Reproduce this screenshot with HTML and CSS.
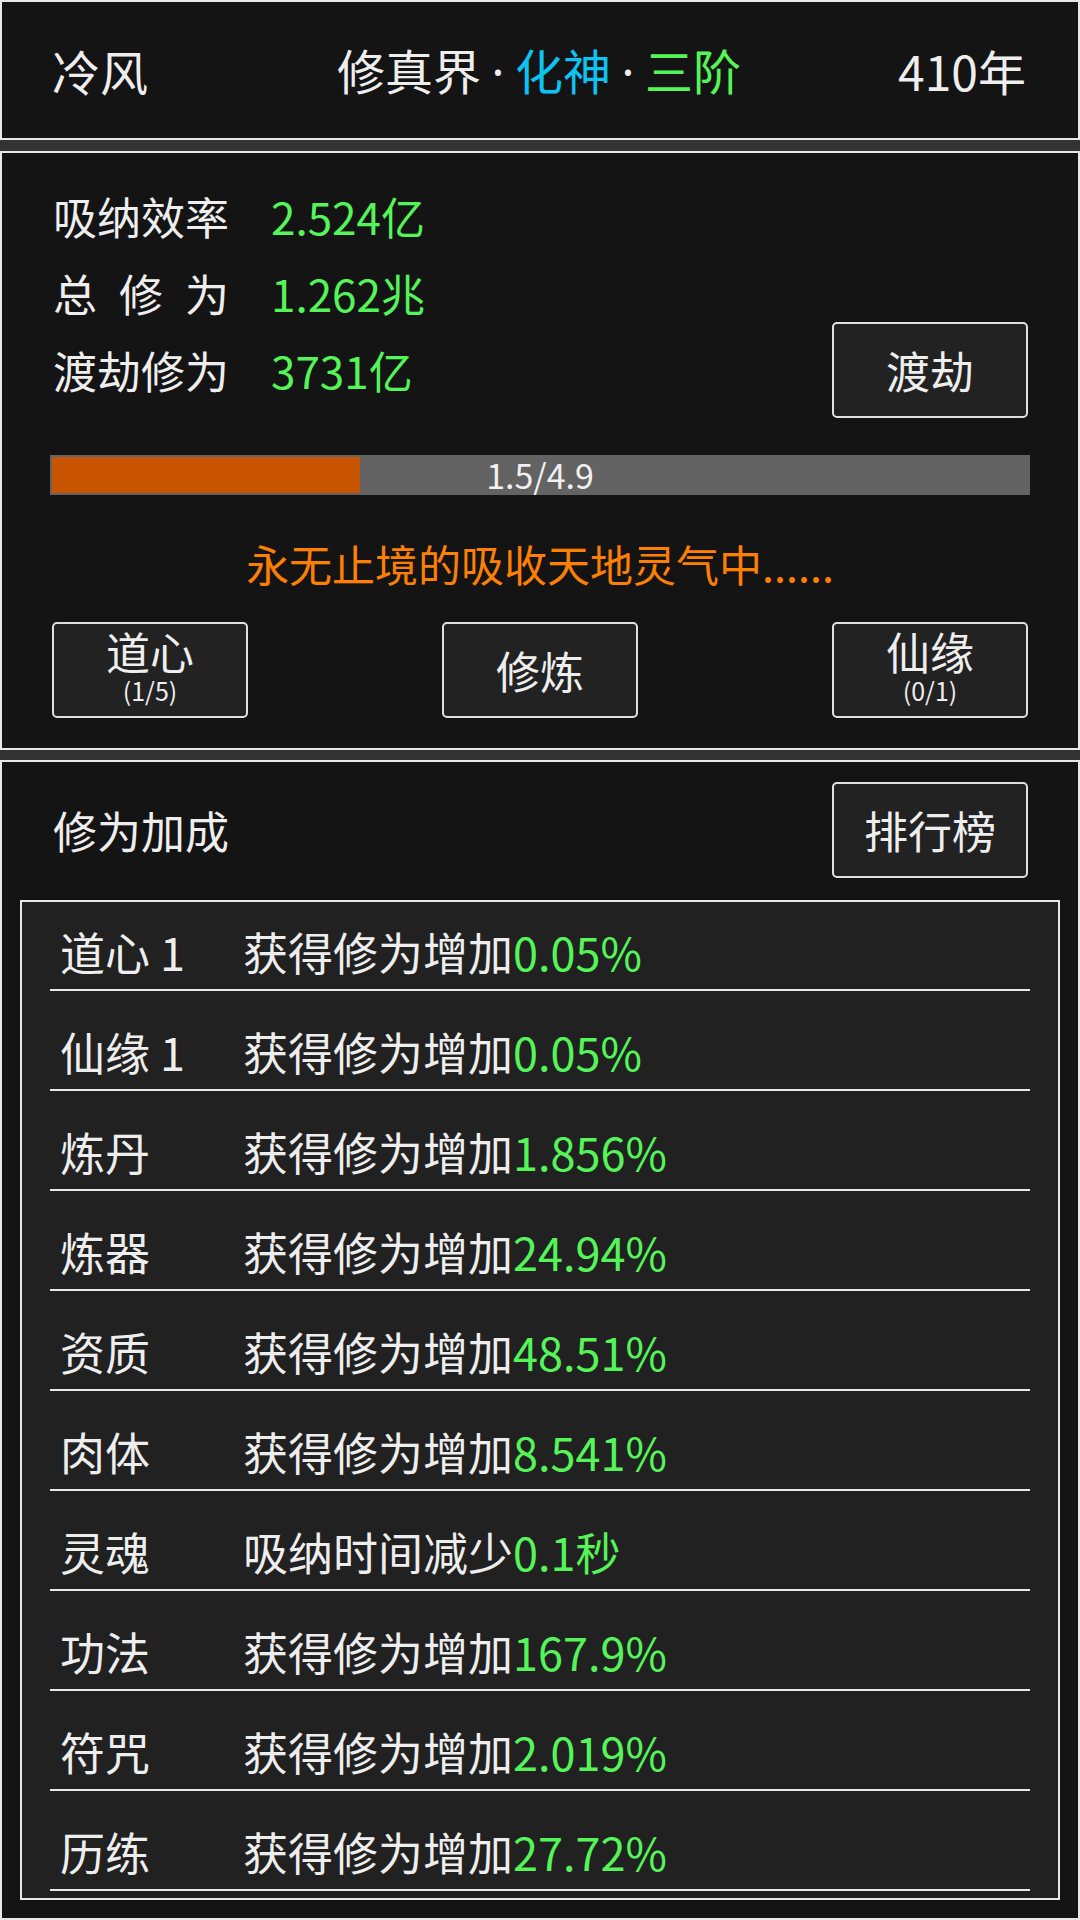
FILE: index.html
```html
<!DOCTYPE html>
<html lang="zh-CN">
<head>
<meta charset="utf-8">
<title>修真界</title>
<link rel="stylesheet" href="styles.css">
</head>
<body>
<div class="page">
  <header class="panel top">
    <div class="name">冷风</div>
    <div class="realm">修真界<span class="dot">·</span><span class="cyan">化神</span><span class="dot">·</span><span class="green">三阶</span></div>
    <div class="age">410年</div>
  </header>

  <section class="panel main">
    <div class="stats">
      <div class="stat-row"><span class="label">吸纳效率</span><span class="value">2.524亿</span></div>
      <div class="stat-row"><span class="label spaced">总修为</span><span class="value">1.262兆</span></div>
      <div class="stat-row"><span class="label">渡劫修为</span><span class="value">3731亿</span><button class="btn push">渡劫</button></div>
    </div>
    <div class="bar">
      <div class="fill" style="width:31.6%"></div>
      <div class="bar-text">1.5/4.9</div>
    </div>
    <div class="status">永无止境的吸收天地灵气中......</div>
    <div class="actions">
      <button class="btn two"><span class="main-t">道心</span><span class="sub-t">(1/5)</span></button>
      <button class="btn">修炼</button>
      <button class="btn two"><span class="main-t">仙缘</span><span class="sub-t">(0/1)</span></button>
    </div>
  </section>

  <section class="panel bonus">
    <div class="bonus-head">
      <div class="title">修为加成</div>
      <button class="btn">排行榜</button>
    </div>
    <div class="list">
      <div class="list-inner">
        <div class="row"><span class="k">道心 1</span><span class="d">获得修为增加<span class="g">0.05%</span></span></div>
        <div class="row"><span class="k">仙缘 1</span><span class="d">获得修为增加<span class="g">0.05%</span></span></div>
        <div class="row"><span class="k">炼丹</span><span class="d">获得修为增加<span class="g">1.856%</span></span></div>
        <div class="row"><span class="k">炼器</span><span class="d">获得修为增加<span class="g">24.94%</span></span></div>
        <div class="row"><span class="k">资质</span><span class="d">获得修为增加<span class="g">48.51%</span></span></div>
        <div class="row"><span class="k">肉体</span><span class="d">获得修为增加<span class="g">8.541%</span></span></div>
        <div class="row"><span class="k">灵魂</span><span class="d">吸纳时间减少<span class="g">0.1秒</span></span></div>
        <div class="row"><span class="k">功法</span><span class="d">获得修为增加<span class="g">167.9%</span></span></div>
        <div class="row"><span class="k">符咒</span><span class="d">获得修为增加<span class="g">2.019%</span></span></div>
        <div class="row"><span class="k">历练</span><span class="d">获得修为增加<span class="g">27.72%</span></span></div>
      </div>
    </div>
  </section>
</div>
</body>
</html>
```

FILE: styles.css
```css
* { box-sizing: border-box; }
html, body {
  margin: 0;
  padding: 0;
  background: #333333;
}
body {
  width: 1080px;
  height: 1920px;
  overflow: hidden;
  font-family: "Noto Sans CJK SC", "Noto Sans", sans-serif;
  color: #eeeeee;
  font-size: 44px;
}
.page {
  display: flex;
  flex-direction: column;
}
.panel {
  border: 2px solid #e8e8e8;
  background: #141414;
}
.top {
  height: 140px;
  display: grid;
  grid-template-columns: 1fr auto 1fr;
  align-items: center;
  padding: 0 52px 0 50px;
  font-size: 48px;
  line-height: 1;
}
.top .age { text-align: right; }
.realm { white-space: nowrap; }
.dot {
  display: inline-block;
  width: 34px;
  text-align: center;
  font-family: "Noto Sans", "DejaVu Sans", sans-serif;
  color: #eeeeee;
}
.cyan { color: #0cc4f4; }
.green { color: #55f55a; }

.main {
  margin-top: 11px;
  height: 599px;
  padding: 24px 48px 0 48px;
}
.stats { display: flex; flex-direction: column; }
.stat-row {
  height: 77px;
  display: flex;
  align-items: center;
  line-height: 1;
  white-space: nowrap;
}
.label {
  width: 179px;
  padding-left: 3px;
  flex: none;
  white-space: nowrap;
}
.label.spaced { letter-spacing: 22px; }
.value {
  margin-left: 42px;
  color: #55f55a;
}
.btn.push { margin-left: auto; margin-right: 2px; }

.btn {
  width: 196px;
  height: 96px;
  margin: 0 2px;
  flex: none;
  border: 2px solid #e0e0e0;
  border-radius: 5px;
  background: #222222;
  color: #eeeeee;
  font-family: inherit;
  font-size: 44px;
  line-height: 1;
  padding: 0;
  display: flex;
  flex-direction: column;
  align-items: center;
  justify-content: center;
}
.two .main-t { line-height: 44px; margin-top: -8px; }
.two .sub-t { font-size: 25px; line-height: 26px; margin-top: 4px; }

.bar {
  position: relative;
  margin-top: 47px;
  height: 40px;
  background: #636363;
  padding: 2px;
}
.fill {
  height: 36px;
  background: #c85400;
}
.bar-text {
  position: absolute;
  left: 0;
  right: 0;
  top: 0;
  height: 40px;
  line-height: 40px;
  text-align: center;
  font-size: 34px;
  color: #f0f0f0;
}
.status {
  margin-top: 38px;
  height: 60px;
  line-height: 60px;
  text-align: center;
  font-size: 43px;
  color: #ff8000;
}
.actions {
  margin-top: 29px;
  display: flex;
  justify-content: space-between;
}

.bonus {
  margin-top: 10px;
  height: 1160px;
  padding: 20px 18px 0 18px;
}
.bonus-head {
  margin: 0 30px;
  height: 96px;
  display: flex;
  align-items: center;
  justify-content: space-between;
}
.bonus-head .title { padding-left: 3px; line-height: 1; }
.list {
  margin-top: 22px;
  height: 1000px;
  border: 2px solid #e8e8e8;
  background: #212121;
  overflow: hidden;
}
.list-inner {
  margin-top: -11px;
  padding: 0 28px;
}
.row {
  height: 100px;
  border-bottom: 2px solid #e8e8e8;
  display: flex;
  align-items: center;
  padding-top: 22px;
  line-height: 1;
  font-size: 45px;
}
.k {
  width: 193px;
  padding-left: 10px;
  flex: none;
}
.g { color: #55f55a; }
```
